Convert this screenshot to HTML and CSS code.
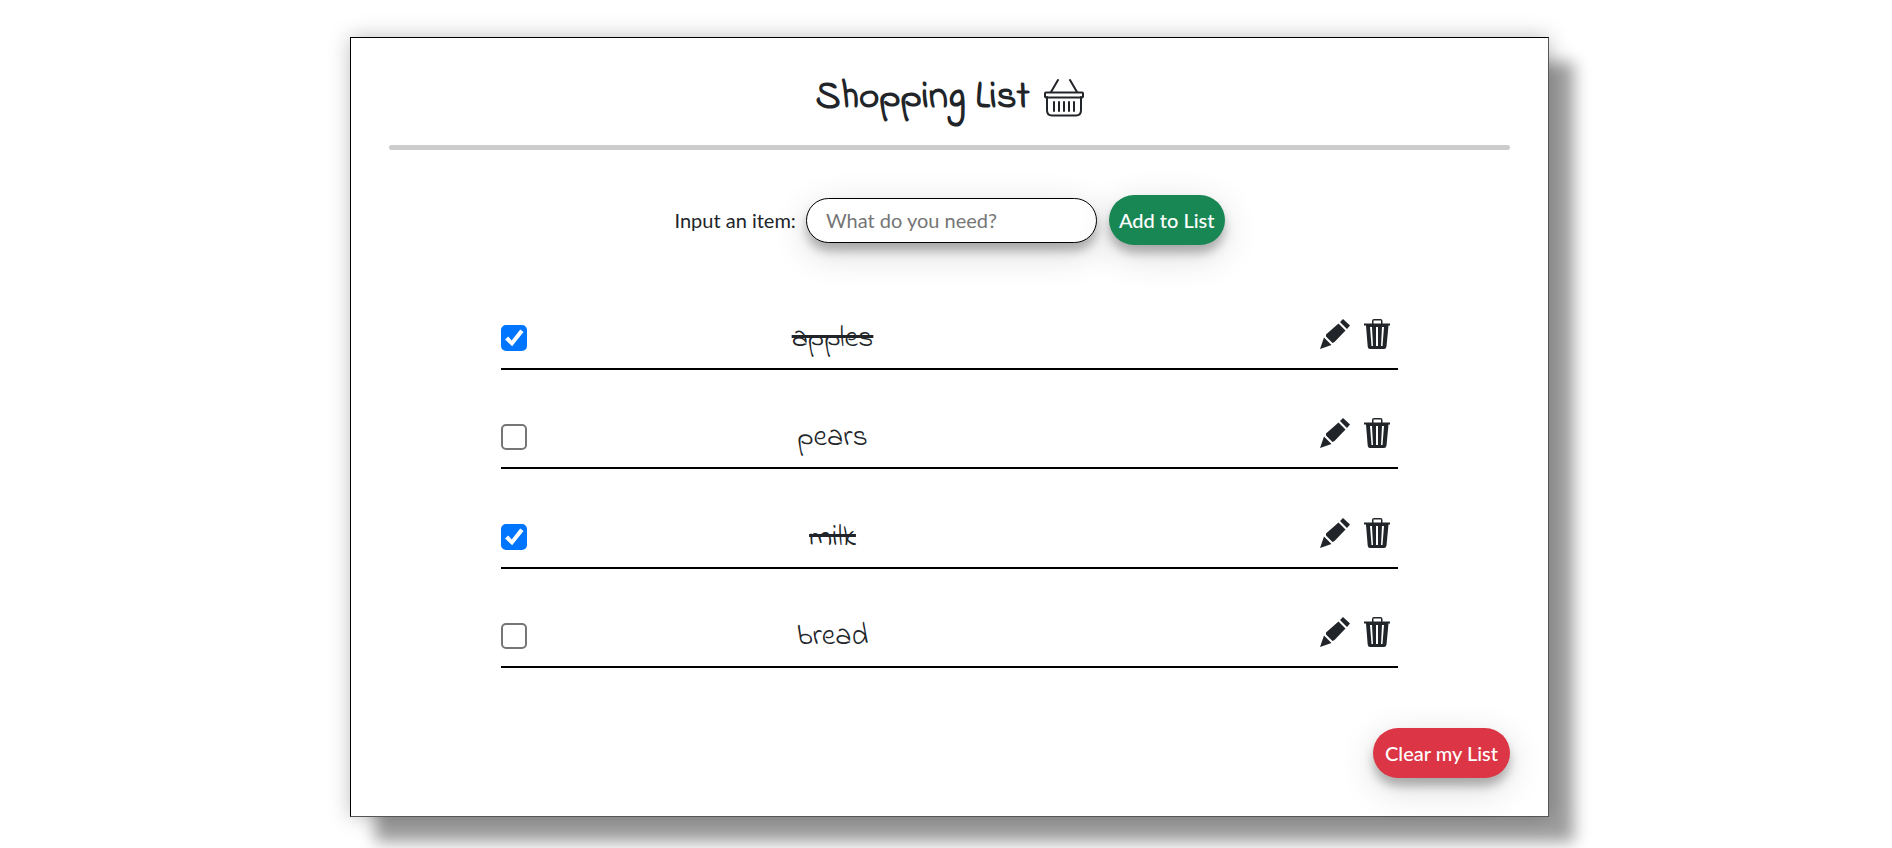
FILE: index.html
```html
<!DOCTYPE html>
<html lang="en">
<head>
<meta charset="utf-8">
<title>Shopping List</title>
<link rel="stylesheet" href="styles.css">
</head>
<body>
<svg class="sprite" aria-hidden="true">
  <symbol id="pencil" viewBox="0 0 30 30">
    <path d="M0 30 4 18.500 11.500 26ZM6 15.500 18.500 4.500 25.500 11.500 14.500 23 12.500 24 6 17.500ZM20 3 23 0 30 6.500 27 10Z"/>
  </symbol>
  <symbol id="trash" viewBox="0 0 26 30">
    <path fill-rule="evenodd" d="M0 4.500H8V2Q8 0 10 0H16.500Q18.500 0 18.500 2V4.500H26V6.500H24.500L22.500 27.500Q22 30 20 30H6Q4 30 3.700 27.500L2 6.500H0ZM9.500 4.500H17V1.500H9.500ZM6 8 7.500 27H9L8 8ZM12 8V27H14V8ZM18 8 17 27H18.500L20 8Z"/>
  </symbol>
</svg>
<main class="card">
  <h1 class="title">Shopping List
    <svg class="basket" viewBox="0 0 40 38" aria-hidden="true">
      <path d="M14 1 7 13M26 1 33 13"/>
      <rect x="1" y="13.500" width="38" height="5" rx="1"/>
      <path d="M3 18V31Q3 36.500 8 36.500H32Q37 36.500 37 31V18"/>
      <path d="M10 23V32M15 23V32M20 23V32M25 23V32M30 23V32"/>
    </svg>
  </h1>
  <hr class="rule">
  <form class="entry">
    <label for="item">Input an item:</label>
    <input class="field" id="item" type="text" placeholder="What do you need?">
    <button class="button add" type="button">Add to List</button>
  </form>
  <ul class="list">
    <li class="row"><input class="tick" type="checkbox" id="i1" checked><label class="name" for="i1">apples</label><span class="tools"><button type="button" class="tool" aria-label="Edit apples"><svg class="pencil"><use href="#pencil"/></svg></button><button type="button" class="tool" aria-label="Delete apples"><svg class="trash"><use href="#trash"/></svg></button></span></li>
    <li class="row"><input class="tick" type="checkbox" id="i2"><label class="name" for="i2">pears</label><span class="tools"><button type="button" class="tool" aria-label="Edit pears"><svg class="pencil"><use href="#pencil"/></svg></button><button type="button" class="tool" aria-label="Delete pears"><svg class="trash"><use href="#trash"/></svg></button></span></li>
    <li class="row"><input class="tick" type="checkbox" id="i3" checked><label class="name" for="i3">milk</label><span class="tools"><button type="button" class="tool" aria-label="Edit milk"><svg class="pencil"><use href="#pencil"/></svg></button><button type="button" class="tool" aria-label="Delete milk"><svg class="trash"><use href="#trash"/></svg></button></span></li>
    <li class="row"><input class="tick" type="checkbox" id="i4"><label class="name" for="i4">bread</label><span class="tools"><button type="button" class="tool" aria-label="Edit bread"><svg class="pencil"><use href="#pencil"/></svg></button><button type="button" class="tool" aria-label="Delete bread"><svg class="trash"><use href="#trash"/></svg></button></span></li>
  </ul>
  <div class="footer"><button class="button clear" type="button">Clear my List</button></div>
</main>
</body>
</html>
```
FILE: styles.css
```css
* { box-sizing: border-box; }
body {
  margin: 0;
  min-height: 100vh;
  padding: 37px 0 31px;
  display: grid;
  grid-template-columns: 350fr 1199fr 343fr;
  align-items: start;
  background: #fff;
  color: #212529;
  font: 20px/30px Lato, "Open Sans", sans-serif;
}
.sprite { position: absolute; width: 0; height: 0; }
.card {
  grid-column: 2;
  padding: 38px;
  border: 1px solid;
  border-color: #000 #555 #555 #000;
  background: #fff;
  box-shadow: 0 0 20px rgba(0, 0, 0, .25), 25px 25px 15px rgba(0, 0, 0, .38);
}
.title {
  display: flex;
  justify-content: center;
  align-items: center;
  gap: 14px;
  margin: 0;
  height: 44px;
  font: 700 39px/48px "Indie Flower", cursive;
}
.basket { width: 40px; height: 38px; fill: none; stroke: #212529; stroke-width: 2; stroke-linecap: round; }
.rule { height: 5px; margin: 25px 0 45px; border: 0; border-radius: 3px; background: #ccc; }
.entry { display: flex; justify-content: center; align-items: center; }
.field {
  width: 291px;
  height: 45px;
  margin: 0 12px 0 10px;
  padding: 0 19px;
  border: 1px solid #000;
  border-radius: 23px;
  font: inherit;
  box-shadow: 0 8px 10px rgba(0, 0, 0, .25), 0 10px 36px rgba(0, 0, 0, .16);
}
.field::placeholder { color: #757575; }
.button {
  height: 50px;
  padding: 0 10px;
  border: 0;
  border-radius: 25px;
  color: #fff;
  font: inherit;
  font-weight: 500;
  box-shadow: 0 8px 10px rgba(0, 0, 0, .25), 0 10px 36px rgba(0, 0, 0, .16);
}
.add { background: #198754; }
.clear { padding: 0 12px; background: #dc3545; }
.list { width: 80%; margin: 26px auto 60px; padding: 0; list-style: none; }
.row {
  display: grid;
  grid-template-columns: 26px 1fr 260px;
  align-items: end;
  height: 99px;
  padding-bottom: 17px;
  border-bottom: 2px solid #000;
}
.row:nth-child(3) { height: 100px; }
.tick {
  appearance: none;
  display: grid;
  width: 26px;
  height: 26px;
  margin: 0;
  border: 2px solid #767676;
  border-radius: 5px;
  background: #fff;
}
.tick:checked { border-color: #0075ff; background: #0075ff; }
.tick:checked::before {
  content: "";
  background: #fff;
  clip-path: polygon(9% 57%, 23% 43%, 39% 61%, 78% 11%, 93% 23%, 41% 88%);
}
.name { text-align: center; font: 400 30px/24px "Indie Flower", cursive; }
.tick:checked + .name { text-decoration: line-through 3px; }
.tools { display: flex; justify-content: flex-end; gap: 14px; padding: 0 8px 2px 0; }
.tool { display: flex; padding: 0; border: 0; background: none; color: #212529; }
.pencil, .trash { height: 30px; fill: currentColor; }
.pencil { width: 30px; }
.trash { width: 26px; }
.footer { display: flex; justify-content: flex-end; }
```
